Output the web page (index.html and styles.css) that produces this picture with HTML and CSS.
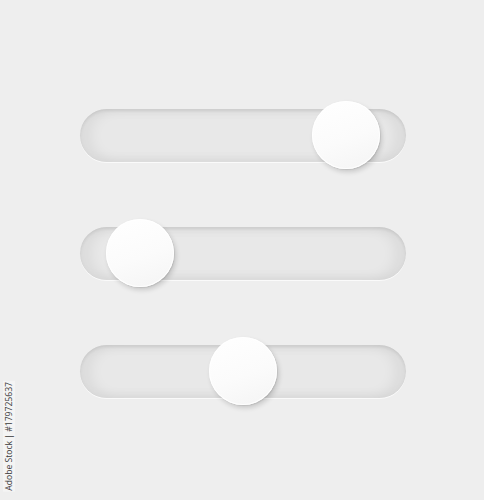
FILE: index.html
```html
<!DOCTYPE html>
<html lang="en">
<head>
<meta charset="utf-8">
<title>Sliders</title>
<link rel="stylesheet" href="styles.css">
</head>
<body>
  <main class="panel">
    <div class="slider">
      <div class="track">
        <div class="knob" style="left: 232px"></div>
      </div>
    </div>
    <div class="slider">
      <div class="track">
        <div class="knob" style="left: 26px"></div>
      </div>
    </div>
    <div class="slider">
      <div class="track">
        <div class="knob" style="left: 129px"></div>
      </div>
    </div>
  </main>
  <div class="credit">Adobe Stock | #179725637</div>
</body>
</html>
```

FILE: styles.css
```css
html, body {
  margin: 0;
  padding: 0;
}

body {
  width: 484px;
  height: 500px;
  background: #eeeeee;
  font-family: "Open Sans", "Liberation Sans", sans-serif;
  position: relative;
  overflow: hidden;
}

.panel {
  display: flex;
  flex-direction: column;
  gap: 49px;
  padding-top: 101px;
  padding-left: 80px;
}

.slider {
  height: 69px;
  display: flex;
  align-items: center;
}

.track {
  position: relative;
  width: 326px;
  height: 53px;
  border-radius: 27px;
  background: #e8e8e8;
  box-shadow:
    inset 0 2px 3px rgba(0, 0, 0, 0.07),
    inset 10px 0 14px rgba(0, 0, 0, 0.06),
    inset -10px 0 14px rgba(0, 0, 0, 0.06),
    0 1px 0 rgba(255, 255, 255, 0.7);
}

.knob {
  position: absolute;
  top: -8px;
  width: 68px;
  height: 68px;
  border-radius: 50%;
  background: linear-gradient(160deg, #ffffff 0%, #fbfbfb 55%, #f4f4f4 100%);
  box-shadow:
    2px 3px 5px rgba(0, 0, 0, 0.16),
    1px 1px 1px rgba(0, 0, 0, 0.08),
    inset 0 0 0 1px rgba(255, 255, 255, 0.9);
}

.credit {
  position: absolute;
  left: 3px;
  bottom: 8px;
  writing-mode: vertical-rl;
  transform: rotate(180deg);
  font-size: 8.6px;
  line-height: 12px;
  color: #3a3a3a;
  background: rgba(255, 255, 255, 0.35);
  padding: 1px 0;
  white-space: nowrap;
}
```
